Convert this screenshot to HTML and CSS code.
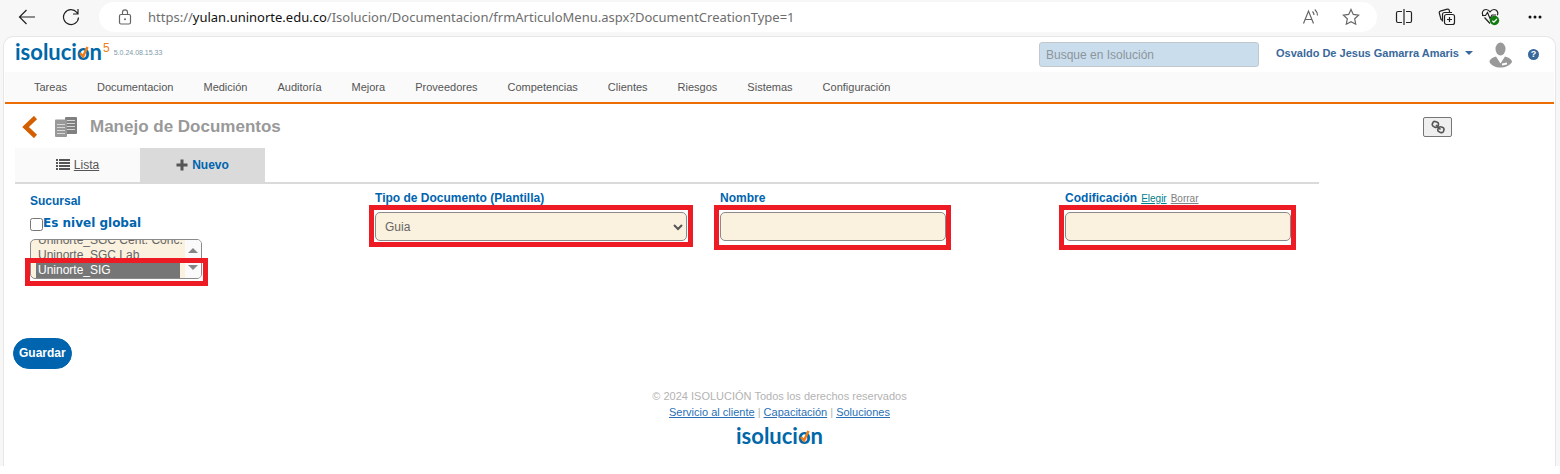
FILE: index.html
```html
<!DOCTYPE html>
<html lang="es">
<head>
    <meta charset="UTF-8">
    <meta name="viewport" content="width=device-width, initial-scale=1.0">
    <title>Isolución - Manejo de Documentos</title>
    <link rel="stylesheet" href="styles.css">
</head>
<body>
    <div class="browser">
        <div class="toolbar">
            <div class="nav-buttons">
                <button class="tool" type="button" aria-label="Atrás">
                    <svg width="18" height="18" viewBox="0 0 18 18"><path d="M17 9H2M8.500 2L1.500 9l7 7"/></svg>
                </button>
                <button class="tool" type="button" aria-label="Actualizar">
                    <svg width="18" height="18" viewBox="0 0 18 18"><path d="M16.500 9.500A7.500 7.500 0 1 1 14.800 4.300L15.500 5.500M16 1v5h-5"/></svg>
                </button>
            </div>
            <div class="omnibox">
                <svg class="lock" width="14" height="16" viewBox="0 0 14 16"><rect x="1.500" y="5.500" width="11" height="9.500" rx="1.500"/><path d="M4.500 5.500V3.300a2.500 2.500 0 0 1 5 0v2.200"/><circle class="dot" cx="7" cy="10.300" r="1"/></svg>
                <div class="url">https://<b>yulan.uninorte.edu.co</b>/Isolucion/Documentacion/frmArticuloMenu.aspx?DocumentCreationType=1</div>
                <button class="tool soft" type="button" aria-label="Leer en voz alta">
                    <svg width="18" height="18" viewBox="0 0 18 18"><path d="M1.500 15.500L6.500 3l5 12.500M3.200 11.500h6.700M10.500 3.500q1.500 1.500 1.500 3.500M12.800 1.500q2.700 2.500 2.700 6"/></svg>
                </button>
                <button class="tool soft" type="button" aria-label="Favorito">
                    <svg width="18" height="18" viewBox="0 0 18 18"><path d="M9 1.500l2.300 4.900 5.300.7-3.900 3.700 1 5.400L9 13.600l-4.700 2.600 1-5.400-3.900-3.700 5.300-.7z"/></svg>
                </button>
            </div>
            <div class="side-buttons">
                <button class="tool" type="button" aria-label="Pantalla dividida">
                    <svg width="18" height="18" viewBox="0 0 18 18"><path d="M7 3.500H3A1.500 1.500 0 0 0 1.500 5v8A1.500 1.500 0 0 0 3 14.500h4M11 3.500h4A1.500 1.500 0 0 1 16.500 5v8a1.500 1.500 0 0 1-1.500 1.500h-4M9 1v16"/></svg>
                </button>
                <button class="tool" type="button" aria-label="Colecciones">
                    <svg width="18" height="18" viewBox="0 0 18 18"><rect x="6.500" y="6.500" width="10" height="10" rx="2"/><path d="M11.500 9v5M9 11.500h5M4.500 12.500L3 11.500 1.300 5a1.500 1.500 0 0 1 1-1.900l7-1.900a1.500 1.500 0 0 1 1.900 1L11.600 4M4.500 13.500V6.500a2 2 0 0 1 2-2H14"/></svg>
                </button>
                <button class="tool" type="button" aria-label="Rendimiento">
                    <svg width="20" height="18" viewBox="0 0 20 18"><path d="M2.500 8C0 5 2 1.500 5 1.500c2 0 3.200 1.200 4 2.300.8-1.100 2-2.300 4-2.300 3 0 4.700 3 3.200 5.800M3.500 9.500L9 15.500M1 7.500h3.500l2-3 2.500 6 2-3.500h4"/><circle class="ok" cx="13.500" cy="12.500" r="4.700"/><path class="tick" d="M11.300 12.700l1.600 1.500 3-3.200"/></svg>
                </button>
                <button class="tool" type="button" aria-label="Más">
                    <svg width="18" height="18" viewBox="0 0 18 18"><g class="fill"><circle cx="4" cy="9" r="1.500"/><circle cx="9" cy="9" r="1.500"/><circle cx="14" cy="9" r="1.500"/></g></svg>
                </button>
            </div>
        </div>

        <div class="page">
            <header class="header">
                <div class="brand">
                    <span class="logo">isoluci<span class="logo-o">o<svg width="12" height="13" viewBox="0 0 12 13"><path d="M2 7l3 3.500L9.500 1"/></svg></span>n</span>
                    <sup class="logo-five">5</sup>
                    <small class="version">5.0.24.08.15.33</small>
                </div>
                <input class="search" type="text" placeholder="Busque en Isolución" aria-label="Busque en Isolución">
                <button class="user" type="button">Osvaldo De Jesus Gamarra Amaris <span class="caret"></span></button>
                <svg class="avatar" width="24" height="26" viewBox="0 0 24 26"><ellipse cx="11.500" cy="7" rx="5" ry="6.500"/><path d="M7 14.500l4.500 7 4.500-7c4 1 7 3 7 5.500-2 3.500-6.500 5.500-11.500 5.500S2 23.500.500 20c0-2.500 2.500-4.500 6.500-5.500z"/><path class="light" d="M13 21.500l5-1v2l-5 1z"/></svg>
                <a class="help" href="#" aria-label="Ayuda">?</a>
            </header>

            <nav class="menu">
                <a href="#">Tareas</a>
                <a href="#">Documentacion</a>
                <a href="#">Medición</a>
                <a href="#">Auditoría</a>
                <a href="#">Mejora</a>
                <a href="#">Proveedores</a>
                <a href="#">Competencias</a>
                <a href="#">Clientes</a>
                <a href="#">Riesgos</a>
                <a href="#">Sistemas</a>
                <a href="#">Configuración</a>
            </nav>

            <div class="title-row">
                <a class="back" href="#" aria-label="Volver">
                    <svg width="16" height="22" viewBox="0 0 16 22"><path d="M13.500 1.500L3.500 11l10 9.500"/></svg>
                </a>
                <svg class="docs" width="22" height="20" viewBox="0 0 22 20"><rect class="page-back" x="10" y="0" width="12" height="17" rx="1"/><path d="M12 3.500h8M12 6.500h8M12 9.500h8M12 12.500h8"/><rect class="page-front" x="0" y="2.500" width="12" height="17.500" rx="1"/><path d="M2 7.500h8M2 10.500h8M2 13.500h8M2 16.500h8"/></svg>
                <h1>Manejo de Documentos</h1>
                <button class="link-button" type="button" aria-label="Enlace">
                    <svg width="14" height="14" viewBox="0 0 14 14"><rect x="1.500" y="1.500" width="6" height="5.500" rx="2.500" transform="rotate(20 4 4)"/><rect x="6.800" y="7" width="6" height="5.500" rx="2.500" transform="rotate(20 10 10)"/><path d="M5 5l4.500 4.500"/></svg>
                </button>
            </div>

            <div class="tabs">
                <a class="tab" href="#">
                    <svg width="14" height="12" viewBox="0 0 14 12"><path d="M0 1h2M3 1h11M0 4h2M3 4h11M0 7h2M3 7h11M0 10h2M3 10h11"/></svg>
                    <span>Lista</span>
                </a>
                <a class="tab active" href="#">
                    <svg width="12" height="12" viewBox="0 0 12 12"><path class="plus" d="M6 .500v11M.500 6h11"/></svg>
                    <span>Nuevo</span>
                </a>
            </div>

            <form class="form">
                <div class="field branch">
                    <label for="sucursal">Sucursal</label>
                    <div class="check">
                        <input id="global" type="checkbox">
                        <label for="global">Es nivel global</label>
                    </div>
                    <div class="marked-last">
                        <div class="list-box">
                            <select id="sucursal" size="4">
                                <option>Uninorte</option>
                                <option>Uninorte_SGC Cent. Conc.</option>
                                <option>Uninorte_SGC Lab</option>
                                <option selected>Uninorte_SIG</option>
                            </select>
                            <span class="arrows"><i class="up"></i><i class="down"></i></span>
                        </div>
                    </div>
                </div>
                <div class="field">
                    <label for="tipo">Tipo de Documento (Plantilla)</label>
                    <div class="marked wide">
                        <select id="tipo"><option>Guia</option></select>
                        <svg class="chevron" width="10" height="7" viewBox="0 0 10 7"><path d="M1 1l4 4 4-4"/></svg>
                    </div>
                </div>
                <div class="field">
                    <label for="nombre">Nombre</label>
                    <div class="marked"><input id="nombre" type="text"></div>
                </div>
                <div class="field">
                    <div class="label-row">
                        <label for="codigo">Codificación</label>
                        <a class="choose" href="#">Elegir</a>
                        <a class="clear" href="#">Borrar</a>
                    </div>
                    <div class="marked"><input id="codigo" type="text"></div>
                </div>
            </form>

            <button class="save" type="button">Guardar</button>

            <footer class="footer">
                <p>© 2024 ISOLUCIÓN Todos los derechos reservados</p>
                <p><a href="#">Servicio al cliente</a> | <a href="#">Capacitación</a> | <a href="#">Soluciones</a></p>
                <span class="logo">isoluci<span class="logo-o">o<svg width="12" height="13" viewBox="0 0 12 13"><path d="M2 7l3 3.500L9.500 1"/></svg></span>n</span>
            </footer>
        </div>
    </div>
    <script>
        // keep the selected branch in view
        const branch = document.getElementById('sucursal');
        branch.scrollTop = branch.scrollHeight;
    </script>
</body>
</html>
```
FILE: styles.css
```css
* {
    box-sizing: border-box;
}
body {
    margin: 0;
    background: #ffffff;
    color: #666666;
    font-family: "Liberation Sans", Arial, sans-serif;
    font-size: 12px;
}
button, input, select {
    font-family: inherit;
    font-size: inherit;
}
.browser {
    background: #f7f7f7;
    padding: 0 4px 0 3px;
}

/* Browser bar */
.toolbar {
    display: flex;
    align-items: center;
    height: 36px;
    padding: 0 12px 2px 15px;
}
.nav-buttons {
    display: flex;
    gap: 26px;
    width: 81px;
}
.tool {
    display: flex;
    padding: 0;
    border: none;
    background: none;
}
.tool svg, .lock {
    fill: none;
    stroke: #222222;
    stroke-width: 1.2;
}
.tool.soft svg, .lock {
    stroke: #666666;
}
.tool .fill {
    fill: #111111;
    stroke: none;
}
.tool .ok {
    fill: #107c10;
    stroke: none;
}
.tool .tick {
    stroke: #ffffff;
}
.lock .dot {
    fill: #666666;
    stroke: none;
}
.omnibox {
    flex: 1;
    display: flex;
    align-items: center;
    gap: 22px;
    height: 30px;
    margin-right: 18px;
    padding: 0 17px 0 19px;
    border-radius: 15px;
    background: #ffffff;
}
.url {
    flex: 1;
    margin-left: -6px;
    font-family: "Noto Sans", sans-serif;
    font-size: 13px;
    color: #6e6e6e;
    white-space: nowrap;
}
.url b {
    font-weight: 400;
    color: #111111;
}
.side-buttons {
    display: flex;
    gap: 25px;
}

/* Page */
.page {
    padding: 0 1px 18px;
    border: 1px solid #e6e6e6;
    border-bottom: none;
    border-radius: 10px 10px 0 0;
    background: #ffffff;
}
.header {
    display: flex;
    align-items: center;
    height: 35px;
    padding: 0 15px 0 10px;
}
.brand {
    flex: 1;
    display: flex;
    align-items: center;
    padding-bottom: 5px;
}
.logo {
    font-family: Lato, sans-serif;
    font-size: 22px;
    font-weight: 700;
    line-height: 24px;
    color: #0067a8;
}
.logo-o {
    position: relative;
}
.logo-o svg {
    position: absolute;
    left: 1px;
    top: 8px;
    fill: none;
    stroke: #f07d1a;
    stroke-width: 2.5;
}
.logo-five {
    margin-left: 1px;
    padding-top: 2px;
    font-size: 12px;
    line-height: 12px;
    align-self: flex-start;
    color: #f07d1a;
}
.version {
    margin-left: 4px;
    font-size: 7px;
    color: #7a9ba8;
}
.search {
    width: 220px;
    height: 25px;
    margin-right: 17px;
    padding: 0 6px;
    border: 1px solid #c3c8cc;
    border-radius: 3px;
    background: #c9dded;
}
.search::placeholder {
    color: #8d959b;
}
.user {
    display: flex;
    align-items: center;
    gap: 6px;
    margin-bottom: 4px;
    padding: 0;
    border: none;
    background: none;
    font-size: 11px;
    font-weight: bold;
    color: #39689b;
}
.caret {
    border: 4px solid transparent;
    border-top-color: #39689b;
    border-bottom: none;
}
.avatar {
    margin: 0 15px 0 16px;
    fill: #999999;
}
.avatar .light {
    fill: #ffffff;
}
.help {
    width: 11px;
    height: 11px;
    border-radius: 50%;
    background: #39689b;
    color: #ffffff;
    font-size: 9px;
    font-weight: bold;
    line-height: 11px;
    text-align: center;
    text-decoration: none;
}
.menu {
    display: flex;
    gap: 30px;
    padding: 0 29px;
    border-bottom: 2px solid #ec6c05;
    background: #fafafa;
    font-size: 11px;
    line-height: 30px;
}
.menu a {
    color: #555555;
    text-decoration: none;
}
.title-row {
    display: flex;
    align-items: center;
    height: 44px;
    padding: 2px 102px 0 17px;
}
.back, .docs {
    display: flex;
    margin-right: 17px;
}
.back svg {
    fill: none;
    stroke: #d35f00;
    stroke-width: 4.5;
}
.docs {
    margin-right: 13px;
    stroke: #d6d6d6;
}
.docs rect {
    stroke: none;
}
.page-back {
    fill: #808080;
}
.page-front {
    fill: #999999;
}
h1 {
    flex: 1;
    margin: 0;
    font-size: 17px;
    color: #999999;
}
.link-button {
    display: flex;
    justify-content: center;
    align-items: center;
    width: 29px;
    height: 20px;
    padding: 0;
    border: 1px solid #767676;
    border-radius: 2px;
    background: #efefef;
}
.link-button svg {
    fill: none;
    stroke: #555555;
    stroke-width: 1.6;
}
.tabs {
    display: flex;
    width: 84.2%;
    margin-left: 10px;
    border-bottom: 2px solid #dadada;
}
.tab {
    display: flex;
    justify-content: center;
    align-items: center;
    gap: 4px;
    width: 125px;
    height: 34px;
    background: #fafafa;
    color: #555555;
}
.tab svg {
    stroke: #555555;
    stroke-width: 2;
}
.tab .plus {
    stroke-width: 3;
}
.tab.active {
    background: #dadada;
    color: #0064ae;
    font-weight: bold;
    text-decoration: none;
}

/* Form */
.form {
    display: grid;
    grid-template-columns: repeat(4, 1fr);
    width: 89.1%;
    margin-left: 10px;
    padding-top: 6px;
}
.field {
    padding: 0 15px;
}
.field label {
    font-weight: bold;
    line-height: 16px;
    color: #0064ae;
}
.branch {
    padding-top: 3px;
}
.check {
    display: flex;
    align-items: center;
    margin: 6px 0 8px;
}
.check input {
    width: 13px;
    height: 13px;
    margin: 3px 0 0;
}
.check label {
    font-family: "DejaVu Sans", Verdana, sans-serif;
}
.label-row {
    display: flex;
    align-items: center;
    gap: 4px;
}
.label-row a {
    font-size: 10px;
}
.choose {
    color: #00808a;
}
.clear {
    color: #808080;
}
.marked, .marked-last {
    position: relative;
    width: 226px;
    margin-top: 6px;
}
.marked.wide {
    width: 312px;
}
.marked input, .marked select {
    display: block;
    width: 100%;
    height: 29px;
    padding: 0 9px;
    border: 1px solid #8a8a8a;
    border-radius: 5px;
    background: #faf1de;
    color: #666666;
}
.marked select {
    appearance: none;
}
.chevron {
    position: absolute;
    right: 4px;
    top: 12px;
    fill: none;
    stroke: #555555;
    stroke-width: 2;
}
.marked::after, .marked-last::after {
    content: "";
    position: absolute;
    inset: -7px -5px -9px -6px;
    border: 5px solid #ed1c24;
    pointer-events: none;
}
.marked.wide::after {
    right: -6px;
    bottom: -6px;
}
.marked-last {
    width: 172px;
}
.marked-last::after {
    inset: 19px -6px -7px -5px;
}
.list-box {
    display: flex;
    height: 40px;
    border: 1px solid #8a8a8a;
    border-radius: 5px;
    background: #faf1de;
    overflow: hidden;
}
.list-box select {
    flex: 1;
    height: 38px;
    padding: 0 5px;
    border: none;
    background: none;
    color: #666666;
    overflow-y: scroll;
    scrollbar-width: none;
}
.list-box option {
    min-height: 15px;
    padding: 0 2px;
    line-height: 15px;
}
.list-box option:checked {
    background: #767676 linear-gradient(#767676, #767676);
    color: #ffffff;
}
.arrows {
    display: flex;
    flex-direction: column;
    justify-content: center;
    align-items: center;
    gap: 12px;
    width: 16px;
    background: #fafafa;
}
.arrows i {
    border: 5px solid transparent;
}
.arrows .up {
    border-top: none;
    border-bottom-color: #858585;
}
.arrows .down {
    border-bottom: none;
    border-top-color: #858585;
}
.save {
    display: block;
    height: 31px;
    margin: 59px 0 0 8px;
    padding: 0 5px 2px;
    border: 1px solid #0064ae;
    border-radius: 16px;
    background: #0064ae;
    color: #ffffff;
    font-weight: bold;
}
.footer {
    display: flex;
    flex-direction: column;
    align-items: center;
    padding-top: 19px;
    font-size: 11px;
    line-height: 16px;
    color: #b3b3b3;
}
.footer p {
    margin: 0;
}
.footer a {
    color: #2a6fb5;
}
.footer .logo {
    margin-top: 4px;
}
```
